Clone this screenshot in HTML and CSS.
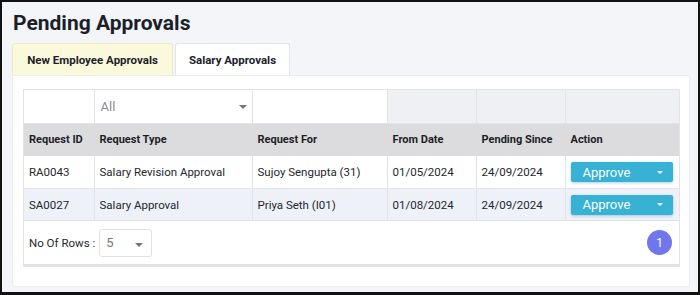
FILE: index.html
```html
<!DOCTYPE html>
<html lang="en">
<head>
    <meta charset="UTF-8">
    <title>Pending Approvals</title>
    <link rel="stylesheet" href="styles.css">
</head>
<body>
    <div class="page">
        <h1 class="title">Pending Approvals</h1>

        <div class="tabs">
            <div class="tab tab-yellow">New Employee Approvals</div>
            <div class="tab tab-white">Salary Approvals</div>
        </div>

        <div class="panel">
            <div class="grid">
                <table>
                    <colgroup>
                        <col style="width: 70px">
                        <col style="width: 158px">
                        <col style="width: 135px">
                        <col style="width: 89px">
                        <col style="width: 89px">
                        <col>
                    </colgroup>
                    <tr class="filter-row">
                        <td class="f-white"></td>
                        <td class="f-white">
                            <div class="filter-select">All<span class="caret"></span></div>
                        </td>
                        <td class="f-white"></td>
                        <td></td>
                        <td></td>
                        <td></td>
                    </tr>
                    <tr class="head-row">
                        <th>Request ID</th>
                        <th>Request Type</th>
                        <th>Request For</th>
                        <th>From Date</th>
                        <th>Pending Since</th>
                        <th>Action</th>
                    </tr>
                    <tr class="row">
                        <td>RA0043</td>
                        <td>Salary Revision Approval</td>
                        <td>Sujoy Sengupta (31)</td>
                        <td>01/05/2024</td>
                        <td>24/09/2024</td>
                        <td><button class="approve">Approve<span class="caret caret-white"></span></button></td>
                    </tr>
                    <tr class="row row-alt">
                        <td>SA0027</td>
                        <td>Salary Approval</td>
                        <td>Priya Seth (I01)</td>
                        <td>01/08/2024</td>
                        <td>24/09/2024</td>
                        <td><button class="approve">Approve<span class="caret caret-white"></span></button></td>
                    </tr>
                </table>

                <div class="footer">
                    <span class="rows-label">No Of Rows :</span>
                    <div class="rows-select">5<span class="caret"></span></div>
                    <span class="pager">1</span>
                </div>
            </div>
        </div>
    </div>
</body>
</html>
```

FILE: styles.css
```css
* { box-sizing: border-box; }
html, body { margin: 0; height: 100%; }
body { font-family: Roboto, "Liberation Sans", sans-serif; color: #222; background: #fff; }

.page { height: 295px; border: 2px solid #111; border-bottom-width: 3px; background: #f3f5f9; padding: 8px 8px 0 10px; overflow: hidden; }
.title { margin: 0; font-size: 21px; font-weight: 700; color: #1b1f2a; line-height: 26px; padding-left: 1px; }

.tabs { display: flex; gap: 2px; margin-top: 7px; }
.tab { height: 32px; font-size: 11.5px; font-weight: 700; color: #1c1f2a; display: flex; align-items: center; justify-content: center; white-space: nowrap; border: 1px solid #e3e4e8; border-bottom: none; border-radius: 3px 3px 0 0; }
.tab-yellow { background: #fbf9dc; border-color: #ecebc6; width: 161px; }
.tab-white { background: #fff; width: 115px; }

.panel { background: #fff; width: 678px; height: 212px; border-radius: 0 3px 3px 3px; border: 1px solid #eaecf0; padding: 13px 9px 0 10px; }

.grid { width: 657px; border: 1px solid #e1e3e8; border-top: none; box-shadow: 0 2px 0 #e2e3e6; }
table { border-collapse: collapse; width: 100%; table-layout: fixed; font-size: 11.5px; }
td, th { border: 1px solid #e1e3e8; padding: 0 5px; text-align: left; white-space: nowrap; }
tr td:first-child, tr th:first-child { border-left: none; }
tr td:last-child, tr th:last-child { border-right: none; }

.filter-row td { height: 34px; background: #eef0f4; }
.filter-row td.f-white { background: #fff; }
.filter-select { position: relative; color: #8a8d93; font-size: 13px; padding-left: 1px; }
.filter-select .caret { position: absolute; right: 0; top: 6px; }

.head-row th { height: 32px; background: #dcdcdf; font-size: 11px; font-weight: 700; color: #1d1f26; border-color: #dcdcdf; border-left: 1px solid #e8e8ea; }
.row td { height: 33px; color: #25272d; background: #fff; }
.row-alt td { background: #eef1f8; height: 32px; }

.caret { display: inline-block; width: 0; height: 0; border-left: 4px solid transparent; border-right: 4px solid transparent; border-top: 4px solid #777; }
.caret-white { border-top-color: #fff; border-left-width: 3px; border-right-width: 3px; border-top-width: 3px; margin-left: auto; }

.approve { display: flex; align-items: center; width: 102px; height: 20px; border: none; border-radius: 2px; background: #37b1d4; color: #fff; font-family: inherit; font-size: 13px; padding: 0 10px 0 12px; box-shadow: 0 1px 3px rgba(30, 120, 160, 0.35); }

.footer { display: flex; align-items: center; height: 43px; padding: 0 7px 0 5px; font-size: 11.5px; color: #25272d; }
.rows-label { margin-right: 4px; }
.rows-select { display: flex; align-items: center; width: 53px; height: 28px; border: 1px solid #dfe1e5; border-radius: 3px; padding: 0 8px 0 6px; color: #777; font-size: 13px; }
.rows-select .caret { margin-left: auto; margin-top: 4px; }
.pager { margin-left: auto; width: 25px; height: 25px; border-radius: 50%; background: #7077ee; color: #fff; font-size: 12px; display: flex; align-items: center; justify-content: center; }
```
